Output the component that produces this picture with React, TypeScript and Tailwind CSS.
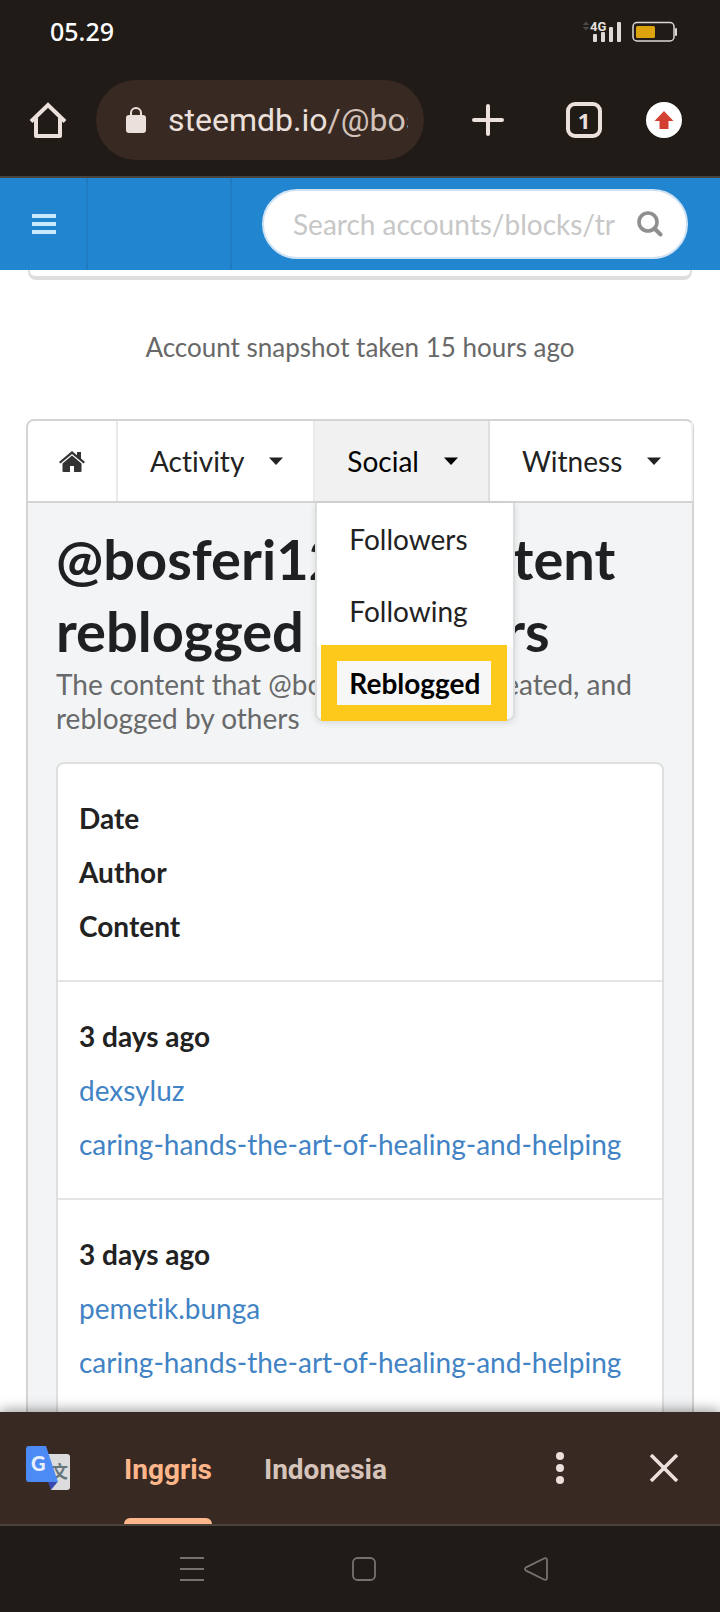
import React from "react";

type Reblog = { date: string; author: string; content: string };

const reblogs: Reblog[] = [
  { date: "3 days ago", author: "dexsyluz", content: "caring-hands-the-art-of-healing-and-helping" },
  { date: "3 days ago", author: "pemetik.bunga", content: "caring-hands-the-art-of-healing-and-helping" },
];

function StatusBar() {
  return (
    <div className="flex h-16 items-center justify-between pr-[42px] pl-[50px] text-white">
      <span className="font-['Noto_Sans',sans-serif] text-[25px] font-medium">05.29</span>
      <div className="flex items-center gap-1.5">
        <svg width="44" height="24" viewBox="0 0 44 24" aria-label="4G signal">
          <path d="M4 1.500 7.200 5H.8zM4 10.500 7.200 7H.8z" fill="#4c4844" />
          <g fill="#ded9d6">
            <rect x="11" y="14" width="4" height="8" rx="1" />
            <rect x="19" y="12" width="4" height="10" rx="1" />
            <rect x="27" y="7" width="4" height="15" rx="1" />
            <rect x="35" y="2" width="4" height="20" rx="1" />
          </g>
          <text x="8" y="11" fontSize="13" fontWeight="700" fill="#e6e1de" fontFamily="Roboto, sans-serif">4G</text>
        </svg>
        <svg width="46" height="22" viewBox="0 0 46 22" aria-label="Battery">
          <rect x="1" y="1.500" width="41" height="18.500" rx="4" fill="none" stroke="#ddd8d4" strokeWidth="1.500" />
          <rect x="4" y="5" width="19" height="12" rx="1.500" fill="#dca30f" />
          <path d="M44 8v6" stroke="#ddd8d4" strokeWidth="2" strokeLinecap="round" />
        </svg>
      </div>
    </div>
  );
}

function BrowserBar() {
  return (
    <div className="flex h-[114px] items-center border-b-2 border-[#4a443f] pr-6">
      <button aria-label="Home" className="flex w-24 justify-center">
        <svg width="38" height="38" viewBox="0 0 38 38" fill="none" stroke="#ebe0dc" strokeWidth="4">
          <path d="M7 17v18h24V17" strokeLinejoin="round" />
          <path d="M2 20.500 19 4l17 16.500" />
        </svg>
      </button>
      <div className="flex h-20 min-w-0 flex-1 items-center rounded-full bg-[#382a23] pr-4 pl-[30px]">
        <svg className="shrink-0" width="20" height="26" viewBox="0 0 20 26">
          <rect y="8" width="20" height="18" rx="3" fill="#ebe0dc" />
          <path d="M5 9V6a5 5 0 0 1 10 0v3" fill="none" stroke="#ebe0dc" strokeWidth="2" />
        </svg>
        <span className="ml-[22px] min-w-0 flex-1 overflow-hidden font-[Roboto,sans-serif] text-[32px] whitespace-nowrap text-[#ebe0dc]">
          steemdb.io<span className="text-[#d3c2ba]">/@bosferi123</span>
        </span>
      </div>
      <button aria-label="New tab" className="ml-4 flex w-24 justify-center">
        <svg width="32" height="32" viewBox="0 0 32 32" stroke="#ebe0dc" strokeWidth="4" strokeLinecap="round">
          <path d="M2 16h28M16 2v28" />
        </svg>
      </button>
      <button aria-label="Open tabs" className="flex w-24 justify-center">
        <span className="flex size-9 items-center justify-center rounded-[9px] border-4 border-[#ebe0dc] font-['Noto_Sans',sans-serif] text-[22px] font-bold text-[#ebe0dc]">1</span>
      </button>
      <button aria-label="Update available" className="flex w-16 justify-center">
        <span className="flex size-9 items-center justify-center rounded-full bg-white">
          <svg width="20" height="20" viewBox="0 0 20 20">
            <path d="M10 1 19.500 11H14.500V19h-9V11H.5z" fill="#d34031" />
          </svg>
        </span>
      </button>
    </div>
  );
}

function SiteHeader() {
  return (
    <header className="flex h-[92px] shrink-0 items-center bg-[#2185d0]">
      <button aria-label="Menu" className="flex h-full w-[88px] items-center border-r-2 border-[#1f7cc2] pl-8">
        <svg width="24" height="20" viewBox="0 0 24 20" fill="#c9eafb">
          <path d="M0 0h24v4H0zM0 8h24v4H0zM0 16h24v4H0z" />
        </svg>
      </button>
      <div className="h-full w-36 border-r-2 border-[#1f7cc2]" />
      <label className="mr-8 ml-[30px] flex h-[70px] min-w-0 flex-1 items-center rounded-full border-2 border-[#cfe2f3] bg-white pr-[23px] pl-[29px]">
        <input
          type="text"
          aria-label="Search"
          placeholder="Search accounts/blocks/tr"
          className="min-w-0 flex-1 text-[28px] outline-none placeholder:text-[#c7c7c7]"
        />
        <svg className="ml-3 shrink-0" width="26" height="26" viewBox="0 0 26 26" fill="none" stroke="#8f8f8f">
          <circle cx="11" cy="11" r="9" strokeWidth="3.600" />
          <path d="m17.500 17.500 6 6" strokeWidth="4" strokeLinecap="round" />
        </svg>
      </label>
    </header>
  );
}

function Caret() {
  return (
    <svg width="14" height="8" viewBox="0 0 14 8" fill="currentColor">
      <path d="M0 .5h14L7 8z" />
    </svg>
  );
}

function SocialMenu() {
  return (
    <div className="absolute top-full left-0 z-10 mt-0.5 w-[200px] rounded-b-lg border-2 border-t-0 border-[#dcdddd] bg-white text-[#222] shadow-[0_2px_6px_rgba(34,36,38,0.12)]">
      <a href="#followers" className="flex h-[72px] items-center px-8">Followers</a>
      <a href="#following" className="flex h-[72px] items-center px-8">Following</a>
      <a href="#reblogged" className="relative flex h-[72px] items-center rounded-b-md bg-[#f7f7f7] px-8 font-bold text-black">
        Reblogged
        <span className="absolute -top-0.5 right-1.5 -bottom-0.5 left-1 border-[16px] border-[#fdca1c]" />
      </a>
    </div>
  );
}

function AccountMenu() {
  const item = "flex h-full items-center gap-[25px] pr-[30px] pl-8";
  return (
    <nav className="flex h-[84px] rounded-t-lg border-2 border-[#d4d4d5] bg-white text-[28px] text-[#222]">
      <a href="#home" aria-label="Account" className="flex w-[90px] shrink-0 items-center justify-center border-r-2 border-[#e8e9e9]">
        <svg width="26" height="21" viewBox="0 0 26 21" fill="#333">
          <path d="M13 0 0 11l1.400 1.600L13 3l11.600 9.600L26 11l-4-3.400V1h-4v3.300z" />
          <path d="M13 4.600 3.500 12.500V20a1 1 0 0 0 1 1H11v-6h4v6h6.500a1 1 0 0 0 1-1v-7.500z" />
        </svg>
      </a>
      <div className="border-r-2 border-[#e8e9e9]">
        <button className={item}>Activity <Caret /></button>
      </div>
      <div className="relative border-r-2 border-[#dfdfe0] bg-[#f1f1f1] text-black">
        <button className={item}>Social <Caret /></button>
        <SocialMenu />
      </div>
      <div className="flex-1 border-r-2 border-[#f0f0f0]">
        <button className={item}>Witness <Caret /></button>
      </div>
    </nav>
  );
}

function ReblogTable() {
  const cell = "block h-[54px] text-left leading-[54px]";
  return (
    <div className="mt-[27px] overflow-hidden rounded-lg border-2 border-[#dedfdf] bg-white">
      <table className="block text-[28px]">
        <thead className="block">
          <tr className="block border-b-2 border-[#e3e4e4] px-[21px] py-[27px] font-bold text-[#222]">
            <th className={cell}>Date</th>
            <th className={cell}>Author</th>
            <th className={cell}>Content</th>
          </tr>
        </thead>
        <tbody className="block">
          {reblogs.map((r) => (
            <tr key={r.author} className="block border-b-2 border-[#e3e4e4] px-[21px] py-[27px] text-[#4183c4]">
              <td className="block h-[54px] leading-[54px] font-bold text-[#222]">{r.date}</td>
              <td className={cell}><a href="#author">{r.author}</a></td>
              <td className={cell}><a href="#post">{r.content}</a></td>
            </tr>
          ))}
        </tbody>
      </table>
    </div>
  );
}

function TranslateBar() {
  return (
    <div className="z-20 flex h-[114px] shrink-0 items-center border-b-2 border-[#4a423d] bg-[#382a23] font-[Roboto,sans-serif] text-[28px] font-bold shadow-[0_-2px_12px_rgba(0,0,0,0.4)]">
      <svg className="ml-[26px]" width="44" height="44" viewBox="0 0 44 44" aria-label="Google Translate">
        <path d="M18 8h23a3 3 0 0 1 3 3v30a3 3 0 0 1-3 3H25z" fill="#dcdcdc" />
        <text x="25" y="32" fontSize="17" fill="#65777b" fontFamily="'Noto Sans CJK SC', sans-serif">文</text>
        <path d="M22 36h9.500L25 44z" fill="#3949ab" />
        <path d="M3 0h17l12 36H3a3 3 0 0 1-3-3V3a3 3 0 0 1 3-3z" fill="#4c8bf5" />
        <text x="5" y="25" fontSize="20" fontWeight="900" fill="#e8f0fe" fontFamily="Lato, sans-serif">G</text>
      </svg>
      <div role="tablist" className="ml-[54px] flex h-full gap-[52px]">
        <button role="tab" aria-selected="true" className="relative h-full pt-1 text-[#ffb68a]">
          Inggris
          <span className="absolute inset-x-0 bottom-0 h-1.5 rounded-t-md bg-[#ffb68a]" />
        </button>
        <button role="tab" aria-selected="false" className="h-full pt-1 text-[#d6c3ba]">Indonesia</button>
      </div>
      <button aria-label="More options" className="mr-[74px] ml-auto">
        <svg width="32" height="32" viewBox="0 0 32 32" fill="#ebe0dc">
          <circle cx="16" cy="4" r="4" /><circle cx="16" cy="16" r="4" /><circle cx="16" cy="28" r="4" />
        </svg>
      </button>
      <button aria-label="Close" className="mr-[42px]">
        <svg width="28" height="28" viewBox="0 0 28 28" stroke="#ebe0dc" strokeWidth="3.600">
          <path d="m1 1 26 26M27 1 1 27" />
        </svg>
      </button>
    </div>
  );
}

function SystemNav() {
  return (
    <div className="z-20 flex h-[86px] shrink-0 items-center justify-center gap-[148px] bg-[#201b17] pl-2">
      <button aria-label="Recent apps">
        <svg width="24" height="24" viewBox="0 0 24 24" fill="#77726f"><path d="M0 0h24v2H0zM0 11h24v2H0zM0 22h24v2H0z" /></svg>
      </button>
      <button aria-label="Home screen">
        <svg width="24" height="24" viewBox="0 0 24 24" fill="none" stroke="#77726f" strokeWidth="1.800"><rect x="1" y="1" width="22" height="22" rx="4.500" /></svg>
      </button>
      <button aria-label="Back">
        <svg width="24" height="24" viewBox="0 0 24 24" fill="none" stroke="#77726f" strokeWidth="1.800" strokeLinejoin="round"><path d="M20.500 1.300 2 10.400q-2 1.600 0 3.200l18.500 9.100q2.500.6 2.500-1.700V3q0-2.300-2.500-1.700z" /></svg>
      </button>
    </div>
  );
}

export default function App() {
  return (
    <div className="flex h-screen flex-col overflow-hidden bg-white font-[Lato,sans-serif] [font-variant-ligatures:none]">
      <div className="shrink-0 bg-[#201b17]">
        <StatusBar />
        <BrowserBar />
      </div>
      <SiteHeader />
      <main className="min-h-0 flex-1 overflow-hidden px-[26px]">
        <div className="mx-0.5 h-2.5 rounded-b-lg border-2 border-t-0 border-b-4 border-[#dedede]" />
        <p className="mt-[47px] text-center text-[26px] leading-10 text-[#686868]">Account snapshot taken 15 hours ago</p>
        <div className="mt-[52px]">
          <AccountMenu />
          <section className="border-x-2 border-[#d4d4d5] bg-[#f3f4f5] px-7 pt-5 pb-7">
            <h1 className="text-[56px] leading-[72px] font-bold text-[#1f2021]">
              @bosferi123's content reblogged by others
            </h1>
            <p className="text-[28px] leading-[34px] text-[#68696a]">
              The content that @bosferi123 has created, and reblogged by others
            </p>
            <ReblogTable />
          </section>
        </div>
      </main>
      <TranslateBar />
      <SystemNav />
    </div>
  );
}
